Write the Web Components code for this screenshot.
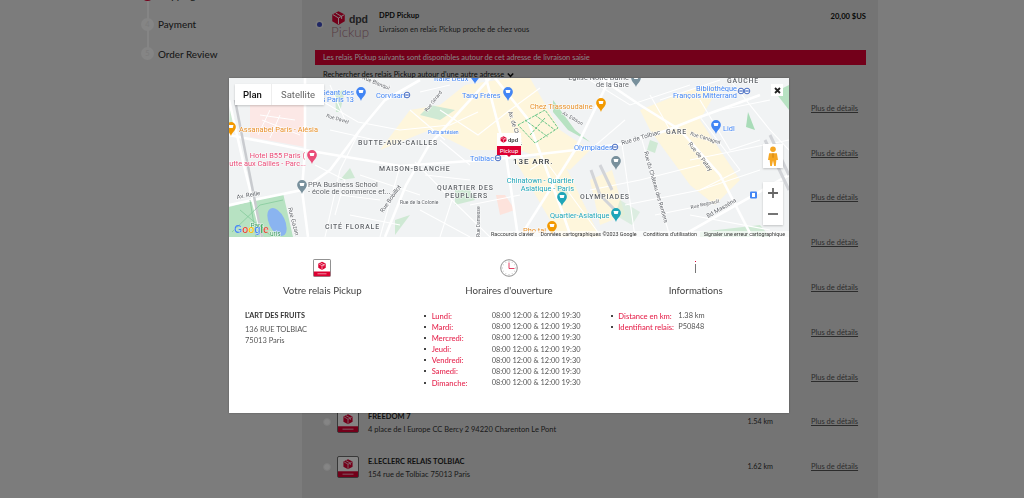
<!DOCTYPE html>
<html lang="fr">
<head>
<meta charset="utf-8">
<title>DPD Pickup</title>
<style>
  html, body { margin: 0; height: 100%; overflow: hidden; }
  body { font-family: Lato, "Liberation Sans", sans-serif; background: #eee; }
</style>
</head>
<body>
<checkout-page>
  <step-nav slot="side">
    <step-item num="3" active>Shipping</step-item>
    <step-item num="4">Payment</step-item>
    <step-item num="5" last>Order Review</step-item>
  </step-nav>
  <shipping-panel>
    <relay-row></relay-row>
    <relay-row></relay-row>
    <relay-row></relay-row>
    <relay-row></relay-row>
    <relay-row></relay-row>
    <relay-row></relay-row>
    <relay-row></relay-row>
    <relay-row name="FREEDOM 7" address="4 place de l Europe CC Bercy 2 94220 Charenton Le Pont" km="1.54 km"></relay-row>
    <relay-row name="E.LECLERC RELAIS TOLBIAC" address="154 rue de Tolbiac 75013 Paris" km="1.62 km"></relay-row>
  </shipping-panel>
</checkout-page>
<relay-modal>
  <relay-map slot="map"></relay-map>
  <info-col title="Votre relais Pickup">
    <relay-icon slot="icon" size="18"></relay-icon>
    <relay-address name="L'ART DES FRUITS" street="136 RUE TOLBIAC" city="75013 Paris"></relay-address>
  </info-col>
  <info-col title="Horaires d'ouverture">
    <clock-icon slot="icon"></clock-icon>
    <info-list>
      <info-line label="Lundi:">08:00 12:00 &amp; 12:00 19:30</info-line>
      <info-line label="Mardi:">08:00 12:00 &amp; 12:00 19:30</info-line>
      <info-line label="Mercredi:">08:00 12:00 &amp; 12:00 19:30</info-line>
      <info-line label="Jeudi:">08:00 12:00 &amp; 12:00 19:30</info-line>
      <info-line label="Vendredi:">08:00 12:00 &amp; 12:00 19:30</info-line>
      <info-line label="Samedi:">08:00 12:00 &amp; 12:00 19:30</info-line>
      <info-line label="Dimanche:">08:00 12:00 &amp; 12:00 19:30</info-line>
    </info-list>
  </info-col>
  <info-col title="Informations">
    <info-i-icon slot="icon"></info-i-icon>
    <info-list>
      <info-line label="Distance en km:">1.38 km</info-line>
      <info-line label="Identifiant relais:">P50848</info-line>
    </info-list>
  </info-col>
</relay-modal>

<script>
const CUBE = `<path fill="#dc0032" d="M12 1 22 6.2v11L12 23 2 17.2v-11z"/><path fill="none" stroke="#fff" stroke-width="1.5" d="M3 6.500 12 12v10M12 12l9.500-5.500M7.500 4l9.500 5.500v4"/>`;

class CheckoutPage extends HTMLElement {
  static { customElements.define("checkout-page", this); }
  constructor() {
    super();
    this.attachShadow({ mode: "open" });
    this.shadowRoot.innerHTML = `
      <style>
        :host { display: grid; grid-template-columns: 302px 576px 1fr; height: 498px; overflow: hidden; color: #222; }
        aside { padding-left: 141px; }
        main { background: #dedede; }
      </style>
      <aside><slot name="side"></slot></aside>
      <main><slot></slot></main>
      <div></div>`;
  }
}

class StepNav extends HTMLElement {
  static { customElements.define("step-nav", this); }
  constructor() {
    super();
    this.attachShadow({ mode: "open" });
    this.shadowRoot.innerHTML = `
      <style>:host { display: flex; flex-direction: column; margin-top: -20px; }</style>
      <slot></slot>`;
  }
}

class StepItem extends HTMLElement {
  static { customElements.define("step-item", this); }
  constructor() {
    super();
    this.attachShadow({ mode: "open" });
    const num = this.getAttribute("num");
    this.shadowRoot.innerHTML = `
      <style>
        :host { display: flex; align-items: center; gap: 4px; height: 29.5px; position: relative; font-size: 9.9px; font-weight: 500; color: #333; }
        b { width: 13px; height: 13px; border-radius: 50%; background: #fff; color: #eee; font-size: 7.5px; font-weight: 400; display: grid; place-items: center; position: relative; z-index: 1; }
        :host([active]) b { background: #dc0032; }
        i { position: absolute; left: 5.5px; top: 50%; height: 100%; width: 2px; background: #fff; }
        :host([last]) i { display: none; }
      </style>
      <i></i><b>${num}</b><span><slot></slot></span>`;
  }
}

class DpdLogo extends HTMLElement {
  static { customElements.define("dpd-logo", this); }
  constructor() {
    super();
    this.attachShadow({ mode: "open" });
    this.shadowRoot.innerHTML = `
      <style>
        :host { display: grid; grid-template-columns: 15px auto; column-gap: 3px; width: 38px; height: 30px; line-height: 1; }
        svg { width: 15px; height: 16px; }
        b { font: 700 10.5px "Liberation Sans", sans-serif; color: #414042; align-self: center; letter-spacing: -.2px; }
        span { grid-column: 1 / 3; font-size: 13.4px; font-weight: 300; color: #a8727f; margin-top: -1.500px; }
      </style>
      <svg viewBox="0 0 24 24">${CUBE}</svg><b>dpd</b><span>Pickup</span>`;
  }
}

class RelayIcon extends HTMLElement {
  static { customElements.define("relay-icon", this); }
  constructor() {
    super();
    this.attachShadow({ mode: "open" });
    const s = this.getAttribute("size") || 22;
    this.shadowRoot.innerHTML = `
      <style>:host { display: block; width: ${s}px; height: ${s}px; } svg { display: block; width: 100%; height: 100%; }</style>
      <svg viewBox="0 0 36 36">
        <rect x=".8" y=".8" width="34.4" height="34.4" rx="2.5" fill="#fff" stroke="#666" stroke-width="1.6"/>
        <rect x="1.6" y="25" width="32.8" height="9.4" fill="#dc0032"/>
        <rect x="9" y="29" width="18" height="1.4" fill="#f5c5d0"/>
        <g transform="translate(9 4.5) scale(.75)">${CUBE}</g>
      </svg>`;
  }
}

class ClockIcon extends HTMLElement {
  static { customElements.define("clock-icon", this); }
  constructor() {
    super();
    this.attachShadow({ mode: "open" });
    this.shadowRoot.innerHTML = `
      <style>:host { display: block; width: 18px; height: 18px; } svg { display: block; }</style>
      <svg width="18" height="18" viewBox="0 0 36 36">
        <circle cx="18" cy="18" r="16.6" fill="#fff" stroke="#777" stroke-width="1.6"/>
        <path stroke="#aaa" stroke-width="1.4" d="M18 3v3M18 30v3M3 18h3M30 18h3M10.5 5l1.5 2.600M25.500 5 24 7.600M5 10.500l2.600 1.500M31 10.500 28.400 12M5 25.500 7.600 24M31 25.500 28.400 24M10.500 31l1.500-2.600M25.500 31 24 28.400"/>
        <path fill="none" stroke="#dc0032" stroke-width="1.500" d="M18 7v12h11"/>
      </svg>`;
  }
}

class InfoIIcon extends HTMLElement {
  static { customElements.define("info-i-icon", this); }
  constructor() {
    super();
    this.attachShadow({ mode: "open" });
    this.shadowRoot.innerHTML = `
      <style>
        :host { display: flex; flex-direction: column; align-items: center; height: 18px; padding-top: 1.500px; box-sizing: border-box; gap: 1.500px; }
        i { width: 1px; height: 1.500px; background: #dc0032; }
        b { width: 1px; height: 9.500px; background: #777; }
      </style>
      <i></i><b></b>`;
  }
}

class RelayRow extends HTMLElement {
  static { customElements.define("relay-row", this); }
  constructor() {
    super();
    this.attachShadow({ mode: "open" });
    const name = this.getAttribute("name") || "";
    const address = this.getAttribute("address") || "";
    const km = this.getAttribute("km") || "";
    this.shadowRoot.innerHTML = `
      <style>
        :host { display: grid; grid-template-columns: 11px 22px 1fr 30px 93px; align-items: center; height: 44.800px; padding-left: 8px; font-size: 7.500px; color: #333; }
        .radio { width: 8px; height: 8px; border-radius: 50%; background: #fff; border: 1px solid #eee; box-sizing: border-box; }
        relay-icon { margin-left: 3px; }
        .txt { padding: 3px 0 0 12px; line-height: 13px; white-space: nowrap; }
        .txt b { display: block; font-weight: 700; color: #222; }
        .km { white-space: nowrap; justify-self: end; font-size: 7.200px; }
        a { color: #555; text-decoration: underline; padding-left: 38px; white-space: nowrap; }
      </style>
      <span class="radio"></span><relay-icon size="22"></relay-icon>
      <div class="txt"><b>${name}</b>${address}</div>
      <span class="km">${km}</span><a>Plus de détails</a>`;
  }
}

class ShippingPanel extends HTMLElement {
  static { customElements.define("shipping-panel", this); }
  constructor() {
    super();
    this.attachShadow({ mode: "open" });
    this.shadowRoot.innerHTML = `
      <style>
        :host { display: block; padding: 0 12px 0 13px; font-size: 7.450px; color: #333; }
        .offer { display: flex; align-items: flex-start; height: 50px; }
        .dot { width: 5px; height: 5px; border-radius: 50%; background: #3f4cc0; box-shadow: 0 0 0 1.500px #eee; margin: 21.500px 9.500px 0 1.500px; flex: none; }
        dpd-logo { margin-top: 10px; flex: none; }
        .copy { flex: 1; padding: 9px 0 0 10px; line-height: 14px; }
        .copy b { display: block; color: #111; font-weight: 700; }
        .price { padding-top: 9px; line-height: 14px; font-weight: 700; color: #111; font-size: 7.600px; }
        .bar { height: 15px; background: #dc0032; color: #fff; line-height: 15px; padding-left: 8px; box-sizing: border-box; }
        .search { height: 15.900px; padding: 5px 0 0 8px; line-height: 10px; color: #111; white-space: nowrap; }
        .search svg { vertical-align: -1px; margin-left: 1px; }
      </style>
      <div class="offer">
        <span class="dot"></span>
        <dpd-logo></dpd-logo>
        <div class="copy"><b>DPD Pickup</b>Livraison en relais Pickup proche de chez vous</div>
        <span class="price">20,00 $US</span>
      </div>
      <div class="bar">Les relais Pickup suivants sont disponibles autour de cet adresse de livraison saisie</div>
      <div class="search">Rechercher des relais Pickup autour d'une autre adresse
        <svg width="7" height="6" viewBox="0 0 7 6"><path d="M.8 1.500 3.500 4.300 6.200 1.500" fill="none" stroke="#111" stroke-width="1.500"/></svg>
      </div>
      <slot></slot>`;
  }
}

class RelayModal extends HTMLElement {
  static { customElements.define("relay-modal", this); }
  constructor() {
    super();
    this.attachShadow({ mode: "open" });
    this.shadowRoot.innerHTML = `
      <style>
        :host { display: block; position: fixed; inset: 0; z-index: 10; background: rgba(0,0,0,.48); padding: 78px 0 0 229px; }
        .box { width: 560px; height: 335px; background: #fff; position: relative; box-shadow: 0 0 2px rgba(0,0,0,.3); }
        .cols { display: grid; grid-template-columns: repeat(3, 1fr); padding-top: 22px; }
        .close { position: absolute; right: 6px; top: 6px; width: 12px; height: 12px; background: #fff; display: grid; place-items: center; }
      </style>
      <div class="box">
        <slot name="map"></slot>
        <div class="cols"><slot></slot></div>
        <span class="close"><svg width="7" height="7" viewBox="0 0 7 7"><path d="M1 1 6 6M6 1 1 6" stroke="#222" stroke-width="1.800"/></svg></span>
      </div>`;
  }
}

class InfoCol extends HTMLElement {
  static { customElements.define("info-col", this); }
  constructor() {
    super();
    this.attachShadow({ mode: "open" });
    this.shadowRoot.innerHTML = `
      <style>
        :host { display: block; }
        .head { display: flex; flex-direction: column; align-items: center; }
        h3 { margin: 6px 0 0; font-size: 9.700px; line-height: 14px; font-weight: 400; color: #444; white-space: nowrap; }
        .body { margin-top: 13px; }
      </style>
      <div class="head"><slot name="icon"></slot><h3>${this.getAttribute("title")}</h3></div>
      <div class="body"><slot></slot></div>`;
  }
}

class RelayAddress extends HTMLElement {
  static { customElements.define("relay-address", this); }
  constructor() {
    super();
    this.attachShadow({ mode: "open" });
    this.shadowRoot.innerHTML = `
      <style>
        :host { display: block; margin-top: -.5px; padding-left: 16px; font-size: 7.500px; color: #555; line-height: 11.200px; }
        b { display: block; color: #333; margin-bottom: 3px; font-size: 7.300px; }
      </style>
      <b>${this.getAttribute("name")}</b>${this.getAttribute("street")}<br>${this.getAttribute("city")}`;
  }
}

class InfoList extends HTMLElement {
  static { customElements.define("info-list", this); }
  constructor() {
    super();
    this.attachShadow({ mode: "open" });
    this.shadowRoot.innerHTML = `
      <style>:host { display: block; padding-left: 8.500px; }</style>
      <slot></slot>`;
  }
}

class InfoLine extends HTMLElement {
  static { customElements.define("info-line", this); }
  constructor() {
    super();
    this.attachShadow({ mode: "open" });
    this.shadowRoot.innerHTML = `
      <style>
        :host { display: grid; grid-template-columns: 7.500px 60px auto; align-items: center; height: 11.170px; font-size: 7.600px; color: #555; white-space: nowrap; }
        i { width: 2px; height: 2px; background: #444; }
        b { font-weight: 500; color: #e6264f; }
        span { font-size: 7.400px; }
      </style>
      <i></i><b>${this.getAttribute("label")}</b><span><slot></slot></span>`;
  }
}

// le plan : coordonnees de la page, viewBox calee sur la modale
class RelayMap extends HTMLElement {
  static { customElements.define("relay-map", this); }
  constructor() {
    super();
    this.attachShadow({ mode: "open" });
    const big = [
      "229,135 305,150 400,166 497,159 575,150 622,144 665,131 700,117 760,95",
      "486,78 506,155 518,237",
      "495,78 527,118 562,211 571,237",
      "305,78 305,150 302,190 308,237",
      "229,205 302,190 330,170 360,130 385,100 420,80",
      "385,237 406,185 429,145 470,100 490,78",
      "680,237 789,175",
      "600,78 640,105 680,130 720,175 752,237",
      "520,237 575,150 610,78",
      "229,100 245,170 262,237",
    ];
    const small = [
      "320,100 358,122 400,130 450,125 478,112", "360,130 340,170 325,237", "400,166 380,237", "415,162 452,200 490,237",
      "440,110 478,135 510,110 540,88", "330,85 345,120", "622,144 635,237", "642,140 670,237",
      "690,160 789,140", "625,205 700,190 760,170", "700,117 740,170", "730,80 770,130 789,150",
      "660,100 720,80", "590,80 630,105 690,85", "545,160 600,235", "470,205 520,195", "420,210 470,237",
      "640,180 700,165", "690,215 770,230", "720,110 770,100", "440,140 470,165", "340,195 380,200",
      "330,130 375,140", "315,165 345,180 335,215", "360,175 420,195", "350,215 400,225", "425,175 470,180",
      "452,200 440,237", "530,170 545,160", "590,190 640,180", "650,95 670,130", "700,100 730,150 760,140",
      "740,170 700,190", "655,215 705,205", "625,120 590,150", "420,92 450,85", "410,110 445,140",
    ];
    const road = (list, w) => list.map(p => `<polyline points="${p}" fill="none" stroke="#fff" stroke-width="${w}"/>`).join("");
    const lab = (x, y, t, c, o = {}) => `<text x="${x}" y="${y}" fill="${c}" font-size="${o.s || 7.400}" ${o.w ? `font-weight="${o.w}"` : ""} ${o.ls ? `letter-spacing="${o.ls}"` : ""} ${o.r ? `transform="rotate(${o.r} ${x} ${y})"` : ""} text-anchor="${o.a || "start"}">${t}</text>`;
    const pin = (x, y, c) => `<g transform="translate(${x} ${y}) scale(.88)"><path fill="${c}" d="M0 8C-1 4-5.500 2-5.500-2.500a5.500 5.500 0 0 1 11 0C5.500 2 1 4 0 8z"/><path fill="#fff" d="M-2.800-4.500h5.600l-.8 3.500h-4z"/></g>`;
    const metro = (x, y) => `<g transform="translate(${x} ${y})"><circle r="2.800" fill="#fff" stroke="#4a6fc4" stroke-width="1"/><path d="M-1.800 0h3.600" stroke="#4a6fc4" stroke-width="1.200"/></g>`;
    const caps = { s: 6.900, w: 500, ls: .85 };
    const blue = "#4285f4", gray = "#5f6368", orange = "#e8912a", teal = "#1fa5b8", pink = "#ea4c78", green = "#3b9a5e";
    const road2 = "#60646a";
    this.shadowRoot.innerHTML = `
      <style>
        :host { display: block; height: 159px; position: relative; overflow: hidden; font-family: Roboto, "Liberation Sans", sans-serif; }
        svg.map { display: block; position: absolute; inset: 0; }
        text { paint-order: stroke; stroke: rgba(255,255,255,.75); stroke-width: 1.200px; font-family: Roboto, "Liberation Sans", sans-serif; }
        .type { position: absolute; left: 6px; top: 6px; height: 21px; display: flex; background: #fff; font-size: 9.500px; line-height: 21px; box-shadow: 0 1px 2px rgba(0,0,0,.2); }
        .type b { font-weight: 500; color: #111; padding: 0 9px 0 8px; width: 19px; }
        .type span { color: #666; padding: 0 9px; border-left: 1px solid #eee; }
        .peg { position: absolute; right: 6px; top: 66px; width: 20px; height: 24px; background: #fff; display: grid; place-items: center; box-shadow: 0 1px 2px rgba(0,0,0,.2); }
        .zoom { position: absolute; right: 6px; top: 104px; width: 20px; height: 43px; background: #fff; display: grid; grid-template-rows: 1fr 1fr; place-items: center; box-shadow: 0 1px 2px rgba(0,0,0,.2); }
        .foot { position: absolute; right: 0; bottom: 0; height: 6.500px; width: 299px; display: flex; justify-content: space-between; padding: 0 4px 0 1px; box-sizing: border-box; background: rgba(255,255,255,.65); font-size: 5.300px; line-height: 6.500px; color: #333; white-space: nowrap; }
        .marker { position: absolute; left: 268px; top: 55px; width: 24px; display: flex; flex-direction: column; }
        .marker .w { height: 13px; background: #fff; display: flex; align-items: center; justify-content: center; gap: 1px; font: 700 5.500px "Liberation Sans", sans-serif; color: #333; }
        .marker .r { height: 9px; background: #dc0032; color: #fff; font: 400 6.300px/9px Lato, sans-serif; text-align: center; position: relative; }
        .marker .r::after { content: ""; position: absolute; left: 10px; top: 9px; border: 2px solid transparent; border-top-color: #dc0032; }
        .logo { position: absolute; left: 5px; bottom: 2px; font: 700 10.500px "Liberation Sans", sans-serif; letter-spacing: -.3px; -webkit-text-stroke: .2px #fff; }
      </style>
      <svg class="map" width="560" height="159" viewBox="229 78 560 159">
        <rect x="229" y="78" width="560" height="159" fill="#f1f3f4"/>
        <g fill="#fef6dc">
          <path d="M380 150 410 110 440 105 465 85 510 78 530 78 560 130 590 150 570 170 520 150 470 150 430 130z"/>
          <path d="M515 160 560 155 600 237 560 237z"/>
          <path d="M640 110 690 90 720 85 700 120 740 180 715 205 690 185 650 130z"/>
          <path d="M590 180 612 170 625 215 600 225z"/>
        </g>
        <path d="M250 105h55v42l-55-10z" fill="#fce8e6"/>
        <g fill="#cfe9d4">
          <path d="M229 207 283 193 293 237H229z" fill="#b7e2c2"/>
          <path d="M553 100 575 130 590 142 568 130 553 112z" fill="#b7e2c2"/>
          <path d="M430 105 455 110 440 120 420 115z"/>
          <path d="M748 112 755 130 746 127z" fill="#a9dcb8"/>
          <path d="M775 92 789 85V110z" fill="#b7e2c2"/>
          <path d="M650 140 658 143 655 153 647 150z"/>
          <path d="M455 190 470 190 475 200 455 205z"/>
          <path d="M555 185 570 190 565 200z" opacity=".6"/>
          <path d="M700 232 760 225 770 237H700z"/>
          <path d="M340 180 350 168 355 178z"/>
          <path d="M395 220 410 215 395 235z"/>
          <path d="M230 108 235 120 229 125z"/>
          <path d="M335 92 345 90 340 112 336 112z"/>
          <path d="M620 200 640 212 632 225 615 215z" opacity=".6"/>
        </g>
        <path d="M496 195 505 195 515 210 500 215z" fill="#fde3dc"/>
        ${road(big, 2.600)}
        ${road(small, 1.100)}
        <g fill="none" stroke="#6dc78a" stroke-width="1" stroke-dasharray="3 1">
          <path d="M518 125 545 110 558 128 535 143zM525 120 548 137M535 115 555 130M530 135 545 118"/>
        </g>
        <path d="M262 120 300 135M270 110 258 135M280 115 270 138M260 115 295 120" stroke="#fff" fill="none"/>
        <path d="M235 100 262 237" stroke="#c9cbcf" stroke-width="2.500" fill="none"/>
        <path d="M765 140 789 190M770 135 789 175" stroke="#d2d4d8" stroke-width="3" fill="none"/>
        <path d="M591 170 600 195 620 215M600 165 612 190" stroke="#d2d4d8" stroke-width="3" fill="none"/>
        <ellipse cx="277" cy="222" rx="8" ry="15" fill="#8ab4f0" transform="rotate(-25 277 222)"/>
        <g fill="none" stroke="#7ec796" stroke-width=".7"><path d="M232 232 260 205 283 200M240 210 270 235M250 200 256 237"/></g>

        ${lab(354, 95, "Géant des", blue, {a:"end"})}${lab(354, 102, "s Paris 13", blue, {a:"end"})}
        ${pin(361, 94, blue)}
        ${lab(376, 98, "Corvisart", blue)}${metro(407, 95)}
        ${lab(462, 98, "Tang Frères", blue)}${pin(508, 94, blue)}
        ${lab(434, 81, "Italie Deux", blue)}${pin(475, 77, blue)}
        ${lab(239, 132, "Assanabel Paris - Alésia", orange)}${pin(231, 129, "#f29900")}
        ${lab(305, 158, "Hotel B55 Paris (", pink, {a:"end"})}${lab(306, 165.500, "utte aux Cailles - Parc...", pink, {a:"end"})}${pin(312, 157, pink)}
        ${lab(308, 186.500, "PPA Business School", gray)}${lab(308, 194, "- école de commerce et...", gray)}${pin(302, 187, "#78909c")}
        ${lab(358, 144.500, "BUTTE-AUX-CAILLES", gray, caps)}
        ${lab(379, 170.500, "MAISON-BLANCHE", gray, caps)}
        ${lab(437, 189.500, "QUARTIER DES", gray, caps)}
        ${lab(445, 197.500, "PEUPLIERS", gray, caps)}
        ${lab(325, 228.500, "CITÉ FLORALE", gray, caps)}
        ${lab(428, 134, "Puits artésien", blue, {s:5})}
        ${lab(326, 117, "Rue Daviel", road2, {s:5, r:17})}
        ${lab(383, 213, "Rue Bobillot", road2, {s:6, r:-55})}
        ${lab(237, 199, "Av. Reille", road2, {s:6, r:-10})}
        ${lab(288, 208, "Rue Gazan", road2, {s:6, r:75})}
        ${lab(400, 204, "Rue de la Colonie", road2, {s:5})}
        ${lab(257, 228, "Parc", green, {s:6.500, a:"middle"})}
        ${lab(270, 235.500, "uris", green, {s:6.500})}
        ${lab(427, 112, "Rue Gérard", road2, {s:5, r:-52})}
        ${lab(362, 79, "Rue Blanqui", road2, {s:5.500, r:22})}
        ${lab(480, 237, "Rue Damesse", road2, {s:5, r:-90})}
        ${lab(508, 112, "Av. de Choisy", road2, {s:6, r:72})}
        ${lab(494, 161, "Tolbiac", blue, {a:"end"})}${metro(498, 158)}
        ${lab(513, 163.500, "13E ARR.", "#3c4043", {s:8, w:500, ls:.9})}
        ${lab(574, 182.500, "Chinatown - Quartier", teal, {a:"end"})}${lab(574, 190.500, "Asiatique - Paris", teal, {a:"end"})}
        ${pin(562, 199, teal)}
        ${lab(580, 198.500, "OLYMPIADES", gray, caps)}
        ${lab(550, 217.500, "Quartier-Asiatique", teal)}${pin(616, 215, teal)}
        ${lab(523, 232.500, "Pho tai", orange)}${pin(552, 228, "#f29900")}
        ${lab(530, 108.500, "Chez Trassoudaine", orange)}${pin(601, 105, "#f29900")}
        ${lab(574, 149.500, "Olympiades", blue)}${metro(615, 147)}
        ${lab(562, 114, "Av. Edison", road2, {s:5, r:30})}
        ${pin(616, 163, "#78909c")}
        ${lab(622, 145, "Rue de Tolbiac", road2, {s:6.200, r:-16})}
        ${lab(644, 152, "Rue du Château des Rentiers", road2, {s:5.800, r:74})}
        ${lab(666, 133.500, "GARE", gray, caps)}
        ${lab(690, 135, "Rue Cantagrel", road2, {s:5, r:17})}
        ${lab(688, 144, "Rue de Patay", road2, {s:6, r:52})}
        ${pin(716, 127, blue)}${lab(723, 130.500, "Lidl", blue)}
        ${lab(737, 91, "Bibliothèque", blue, {a:"end"})}${lab(737, 98, "François Mitterrand", blue, {a:"end"})}
        ${metro(741, 91)}${metro(747, 91)}
        ${lab(727, 83, "GAUCHE", gray, caps)}
        ${lab(629, 80, "Église Notre Dame", gray, {a:"end"})}${lab(629, 87, "de la Gare", gray, {a:"end"})}
        ${pin(636, 80, "#78909c")}
        ${lab(691, 209, "Rue Regnault", road2, {s:5, r:-13})}
        ${lab(708, 218, "Bd Masséna", road2, {s:6, r:-30})}
        <rect x="750" y="191.500" width="7" height="7" rx="1" fill="${blue}"/><rect x="752" y="193" width="3" height="4" fill="#fff"/>
      </svg>
      <div class="type"><b>Plan</b><span>Satellite</span></div>
      <div class="marker">
        <div class="w"><svg width="7" height="7" viewBox="0 0 24 24">${CUBE}</svg>dpd</div>
        <div class="r">Pickup</div>
      </div>
      <div class="peg">
        <svg width="12" height="20" viewBox="0 0 10 18"><circle cx="5" cy="3" r="2.500" fill="#f5a623"/><path d="M1.500 6.500h7l1 6H8l-.5 5.500h-1.500L5 13l-1 5H2.500L2 12.500H.5z" fill="#f5a623"/><path d="M5 6.500v4" stroke="#c77f10" stroke-width=".8"/></svg>
      </div>
      <div class="zoom">
        <svg width="10" height="10" viewBox="0 0 10 10"><path d="M0 5h10M5 0v10" stroke="#666" stroke-width="1.800"/></svg>
        <svg width="10" height="10" viewBox="0 0 10 10"><path d="M0 5h10" stroke="#666" stroke-width="1.800"/></svg>
      </div>
      <div class="logo"><span style="color:#4285f4">G</span><span style="color:#ea4335">o</span><span style="color:#fbbc05">o</span><span style="color:#4285f4">g</span><span style="color:#34a853">l</span><span style="color:#ea4335">e</span></div>
      <div class="foot"><span>Raccourcis clavier</span><span>Données cartographiques ©2023 Google</span><span>Conditions d'utilisation</span><span>Signaler une erreur cartographique</span></div>`;
  }
}
</script>
</body>
</html>
